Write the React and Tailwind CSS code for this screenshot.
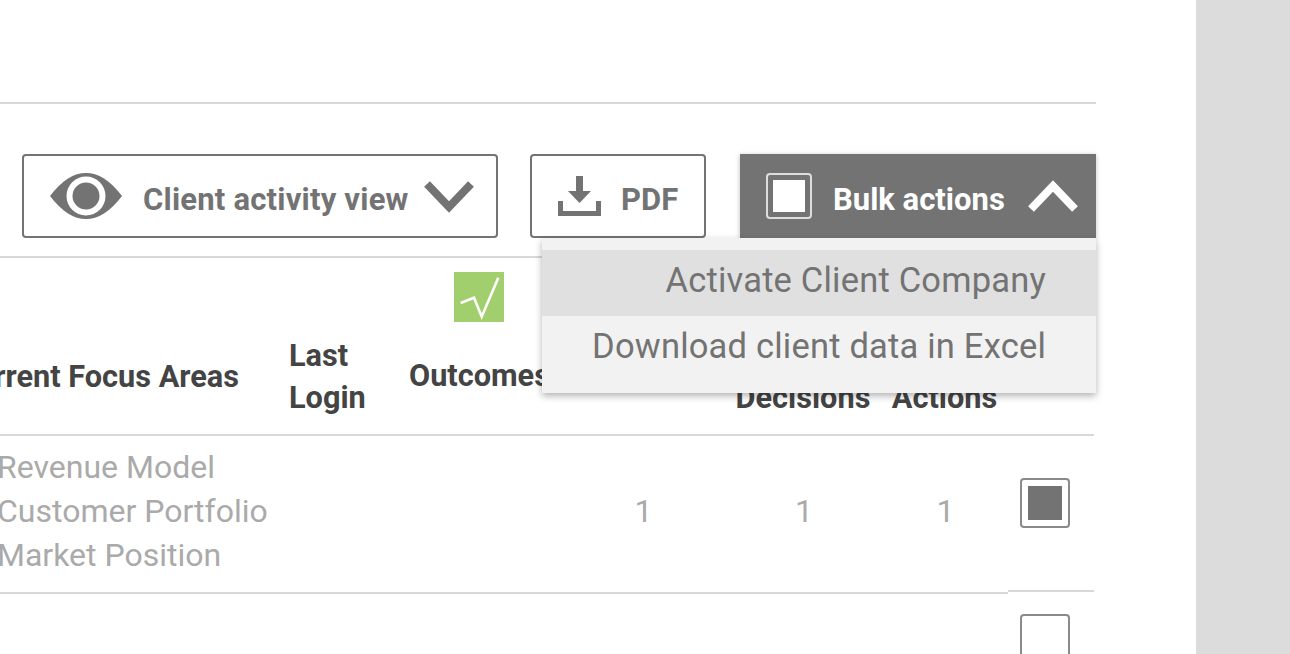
const focusAreas = ["Revenue Model", "Customer Portfolio", "Market Position"];

const Chevron = ({ up, color }) => (
  <svg width="50" height="33" viewBox="0 0 50 33" className="shrink-0">
    <path
      d={up ? "M3 29L25 6L47 29" : "M3 4L25 27L47 4"}
      fill="none"
      stroke={color}
      strokeWidth="8"
    />
  </svg>
);

const Eye = () => (
  <svg width="72" height="46" viewBox="0 0 72 46" className="shrink-0">
    <path d="M0 23C12 7 24 0 36 0C48 0 60 7 72 23C60 39 48 46 36 46C24 46 12 39 0 23Z" fill="#737373" />
    <circle cx="36" cy="23" r="19.5" fill="#fff" />
    <circle cx="36" cy="23" r="13.5" fill="#737373" />
  </svg>
);

const DownloadIcon = () => (
  <svg width="43" height="40" viewBox="0 0 43 40" className="shrink-0">
    <path d="M18 0H25V15H33L21.5 27L10 15H18Z" fill="#737373" />
    <path d="M2.5 25V37.5H40.5V25" fill="none" stroke="#737373" strokeWidth="5" />
  </svg>
);

const CheckBox = ({ checked }) => (
  <div className="w-[50px] h-[50px] shrink-0 border-2 border-[#8a8a8a] rounded-[4px] bg-white flex items-center justify-center">
    {checked && <div className="w-[34px] h-[34px] bg-[#737373]"></div>}
  </div>
);

const HeaderCell = ({ children }) => (
  <div className="pt-[76px] pb-[14px] h-[176px] flex items-center text-[30.7px] leading-[42px] font-bold text-[#444444] whitespace-nowrap">
    <div className="w-full">{children}</div>
  </div>
);

const App = () => {
  return (
    <div className="flex w-full h-[654px] overflow-hidden bg-white font-['Roboto',sans-serif]">
      <div className="w-[1196px] shrink-0">
        <div className="w-[1096px]">
          <div className="h-[104px] border-b-2 border-[#d8d8d8]"></div>

          {/* toolbar */}
          <div className="h-[154px] border-b-2 border-[#d8d8d8] pt-[50px] pl-[22px] flex items-start">
            <button className="w-[476px] h-[84px] border-2 border-[#737373] rounded-[4px] flex items-center pl-[26px] text-[#737373] text-[31px] font-bold">
              <Eye />
              <span className="ml-[21px] pt-[8px] whitespace-nowrap tracking-[0.2px]">Client activity view</span>
              <span className="ml-[15px]"><Chevron color="#737373" /></span>
            </button>
            <button className="ml-[32px] w-[176px] h-[84px] border-2 border-[#737373] rounded-[4px] flex items-center pl-[26px] text-[#737373] text-[31px] font-bold">
              <DownloadIcon />
              <span className="ml-[20px] pt-[8px]">PDF</span>
            </button>
            <div className="relative ml-[34px]">
              <button className="w-[356px] h-[84px] bg-[#737373] flex items-center pl-[26px] text-white text-[31px] font-bold shadow-[0_1px_5px_rgba(0,0,0,0.25)]">
                <span className="w-[46px] h-[46px] border-2 border-[#dddddd] rounded-[4px] flex items-center justify-center shrink-0">
                  <span className="w-[32px] h-[32px] bg-white"></span>
                </span>
                <span className="ml-[21px] pt-[8px] whitespace-nowrap">Bulk actions</span>
                <span className="ml-[23px]"><Chevron up color="#ffffff" /></span>
              </button>
              <div className="absolute z-10 top-full right-0 w-[554px] pt-[12px] pb-[11px] bg-[#f2f2f2] shadow-[0_3px_7px_rgba(0,0,0,0.3)] text-[34.5px] tracking-[0.2px] text-[#737373] text-right">
                <div className="h-[66px] leading-[60px] pr-[50px] bg-[#e0e0e0]">Activate Client Company</div>
                <div className="h-[66px] leading-[60px] pr-[50px]">Download client data in Excel</div>
              </div>
            </div>
          </div>

          {/* table header */}
          <div className="w-[1094px] border-b-2 border-[#d8d8d8] grid grid-cols-[289px_120px_151px_165px_156px_127px_86px]">
            <div className="flex justify-end pr-[50px]">
              <HeaderCell>Current Focus Areas</HeaderCell>
            </div>
            <HeaderCell>Last<br />Login</HeaderCell>
            <div className="h-[176px] pt-[14px] text-[30.7px] leading-[42px] font-bold text-[#444444] whitespace-nowrap">
              <div className="ml-[45px] w-[50px] h-[50px] bg-[#a2cf6e]">
                <svg width="50" height="50" viewBox="0 0 50 50">
                  <path d="M6.7 31L20 25.7L27.7 44.7L44.3 5.7" fill="none" stroke="#fff" strokeWidth="2.6" />
                </svg>
              </div>
              <div className="mt-[33px]">Outcomes</div>
            </div>
            <div></div>
            <div className="text-center"><HeaderCell><br />Decisions</HeaderCell></div>
            <div className="text-center"><HeaderCell><br />Actions</HeaderCell></div>
            <div></div>
          </div>

          {/* first row */}
          <div className="flex items-start">
            <div className="w-[1008px] h-[158px] border-b-2 border-[#d8d8d8] grid grid-cols-[289px_120px_151px_165px_156px_127px] text-[32px] text-[#aaaaaa]">
              <div className="pt-[9px] -ml-[3px] leading-[44px] whitespace-nowrap">
                {focusAreas.map((area) => (
                  <div key={area}>{area}</div>
                ))}
              </div>
              <div></div>
              <div></div>
              <div className="text-center pt-[53px] pl-[2px] leading-[44px]">1</div>
              <div className="text-center pt-[53px] pl-[2px] leading-[44px]">1</div>
              <div className="text-center pt-[53px] pl-[2px] leading-[44px]">1</div>
            </div>
            <div className="w-[86px] h-[156px] border-b-2 border-[#d8d8d8] pt-[42px] pl-[12px]">
              <CheckBox checked />
            </div>
          </div>

          {/* second row */}
          <div className="flex justify-start pl-[1020px] pt-[20px]">
            <CheckBox />
          </div>
        </div>
      </div>
      <div className="flex-1 bg-[#dcdcdc]"></div>
    </div>
  );
};

export default App;
